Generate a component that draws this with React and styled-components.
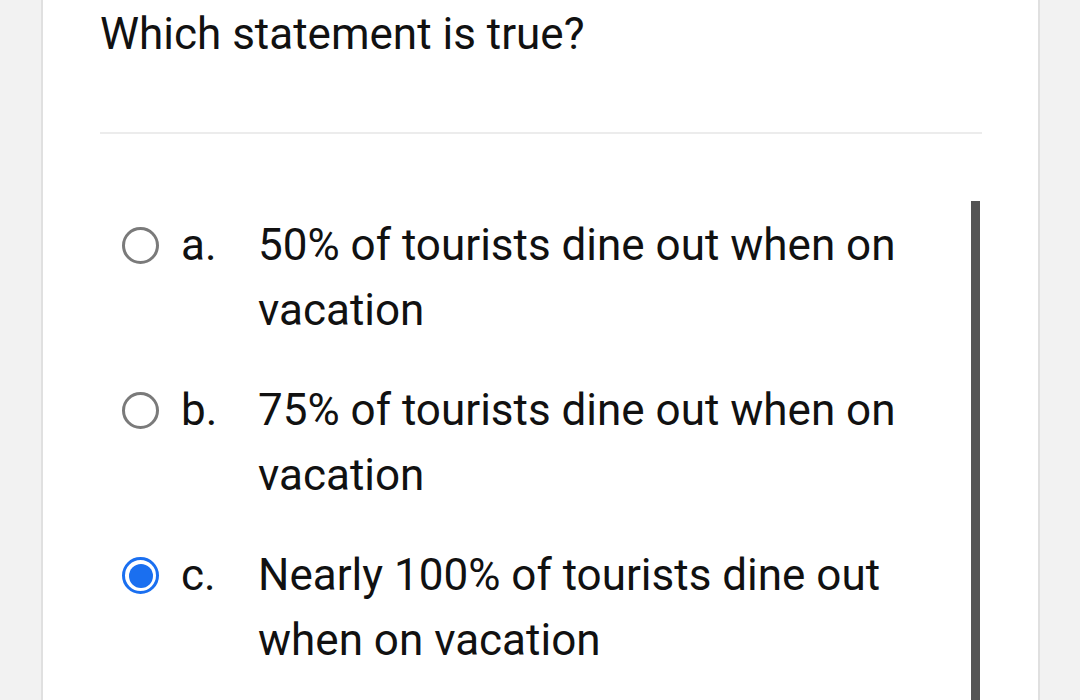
import React from "react"
import styled, { createGlobalStyle } from "styled-components"

const GlobalStyle = createGlobalStyle`
  html, body {
    margin: 0;
    padding: 0;
    background: #f2f2f2;
    font-family: Roboto, "Liberation Sans", sans-serif;
  }
`

const Page = styled.div`
  height: 700px;
  overflow: hidden;
  padding-left: 41px;
`

const Card = styled.section`
  position: relative;
  box-sizing: border-box;
  width: 999px;
  height: 700px;
  background: #ffffff;
  border-left: 2px solid #e0e0e0;
  border-right: 2px solid #e0e0e0;
  padding: 0 56px 0 57px;
`

const Question = styled.h2`
  margin: 0;
  padding-top: 6px;
  font-size: 44px;
  line-height: 56px;
  font-weight: 400;
  color: #111;
`

const Divider = styled.hr`
  margin: 70px 0 0;
  border: none;
  height: 2px;
  background: #ececec;
`

const Options = styled.ul`
  list-style: none;
  margin: 0;
  padding: 79px 0 0;
  display: flex;
  flex-direction: column;
  gap: 35px;
`

const Option = styled.li`
  display: flex;
  align-items: flex-start;
`

const Radio = styled.span`
  flex: none;
  box-sizing: border-box;
  width: 37px;
  height: 37px;
  margin: 14px 0 0 22px;
  border-radius: 50%;
  border: 3px solid ${p => (p.checked ? "#1a6ff0" : "#7a7a7a")};
  display: flex;
  align-items: center;
  justify-content: center;

  &::after {
    content: "";
    display: ${p => (p.checked ? "block" : "none")};
    width: 24px;
    height: 24px;
    border-radius: 50%;
    background: #1a6ff0;
  }
`

const Letter = styled.span`
  flex: none;
  width: 77px;
  margin-left: 22px;
  font-size: 44px;
  line-height: 65px;
  color: #111;
`

const Text = styled.span`
  font-size: 44px;
  line-height: 65px;
  color: #111;
  max-width: 660px;
`

const ScrollThumb = styled.div`
  position: absolute;
  left: 928px;
  top: 201px;
  width: 9px;
  height: 520px;
  background: #545454;
`

const options = [
  { letter: "a.", text: "50% of tourists dine out when on vacation" },
  { letter: "b.", text: "75% of tourists dine out when on vacation" },
  { letter: "c.", text: "Nearly 100% of tourists dine out when on vacation", checked: true },
]

const App = () => (
  <>
    <GlobalStyle />
    <Page>
      <Card>
        <Question>Which statement is true?</Question>
        <Divider />
        <Options>
          {options.map(o => (
            <Option key={o.letter}>
              <Radio checked={o.checked} />
              <Letter>{o.letter}</Letter>
              <Text>{o.text}</Text>
            </Option>
          ))}
        </Options>
        <ScrollThumb />
      </Card>
    </Page>
  </>
)

export default App
